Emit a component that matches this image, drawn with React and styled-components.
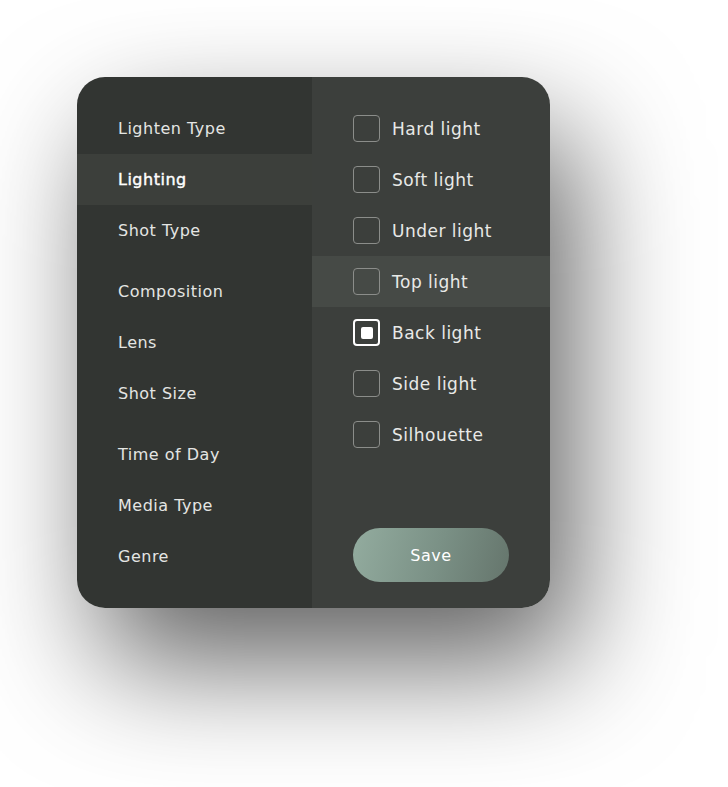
import styled, { createGlobalStyle } from 'styled-components';

const GlobalStyle = createGlobalStyle`
  body {
    margin: 0;
    background: #ffffff;
    font-family: 'DejaVu Sans', 'Liberation Sans', sans-serif;
  }
`;

const Page = styled.div`
  padding: 77px 0 0 77px;
  min-height: 787px;
  box-sizing: border-box;
`;

const Card = styled.div`
  width: 473px;
  height: 531px;
  display: grid;
  grid-template-columns: 235px 1fr;
  border-radius: 28px;
  overflow: hidden;
  box-shadow: 24px 55px 120px rgba(0, 0, 0, 0.62);
`;

const Sidebar = styled.nav`
  background: #323532;
  padding: 26px 0;
  display: flex;
  flex-direction: column;
`;

const NavItem = styled.div`
  height: 51px;
  flex-shrink: 0;
  display: flex;
  align-items: center;
  padding-left: 41px;
  margin-top: ${(p) => (p.$gap ? '10px' : '0')};
  background: ${(p) => (p.$active ? '#3c3f3b' : 'transparent')};
  color: ${(p) => (p.$active ? '#ffffff' : '#e4e5e3')};
  font-size: 16px;
  letter-spacing: 0.5px;
  -webkit-text-stroke: ${(p) => (p.$active ? '0.4px #ffffff' : '0')};
`;

const Options = styled.div`
  background: #3c3f3c;
  padding: 26px 0;
  display: flex;
  flex-direction: column;
`;

const OptionRow = styled.label`
  height: 51px;
  display: flex;
  align-items: center;
  gap: 12px;
  padding-left: 41px;
  background: ${(p) => (p.$hover ? '#464a46' : 'transparent')};
  color: #e8e9e7;
  font-size: 17px;
  letter-spacing: 0.5px;
`;

const Box = styled.span`
  width: 27px;
  height: 27px;
  box-sizing: border-box;
  border-radius: 4px;
  border: ${(p) => (p.$checked ? '2px solid #ffffff' : '1.5px solid #8b8d8a')};
  display: flex;
  align-items: center;
  justify-content: center;

  &::after {
    content: '';
    display: ${(p) => (p.$checked ? 'block' : 'none')};
    width: 12px;
    height: 12px;
    border-radius: 2px;
    background: #ffffff;
  }
`;

const SaveButton = styled.button`
  margin: auto 0 0 41px;
  width: 156px;
  height: 54px;
  border: none;
  border-radius: 27px;
  background: linear-gradient(105deg, #93ac9f 0%, #7a9085 55%, #65756c 100%);
  color: #ffffff;
  font-family: inherit;
  font-size: 16px;
  letter-spacing: 0.5px;
`;

const categories = [
  { label: 'Lighten Type' },
  { label: 'Lighting', active: true },
  { label: 'Shot Type' },
  { label: 'Composition', gap: true },
  { label: 'Lens' },
  { label: 'Shot Size' },
  { label: 'Time of Day', gap: true },
  { label: 'Media Type' },
  { label: 'Genre' },
];

const lights = [
  { label: 'Hard light' },
  { label: 'Soft light' },
  { label: 'Under light' },
  { label: 'Top light', hover: true },
  { label: 'Back light', checked: true },
  { label: 'Side light' },
  { label: 'Silhouette' },
];

export default function App() {
  return (
    <>
      <GlobalStyle />
      <Page>
        <Card>
          <Sidebar>
            {categories.map((c) => (
              <NavItem key={c.label} $active={c.active} $gap={c.gap}>
                {c.label}
              </NavItem>
            ))}
          </Sidebar>
          <Options>
            {lights.map((l) => (
              <OptionRow key={l.label} $hover={l.hover}>
                <Box $checked={l.checked} />
                {l.label}
              </OptionRow>
            ))}
            <SaveButton>Save</SaveButton>
          </Options>
        </Card>
      </Page>
    </>
  );
}
